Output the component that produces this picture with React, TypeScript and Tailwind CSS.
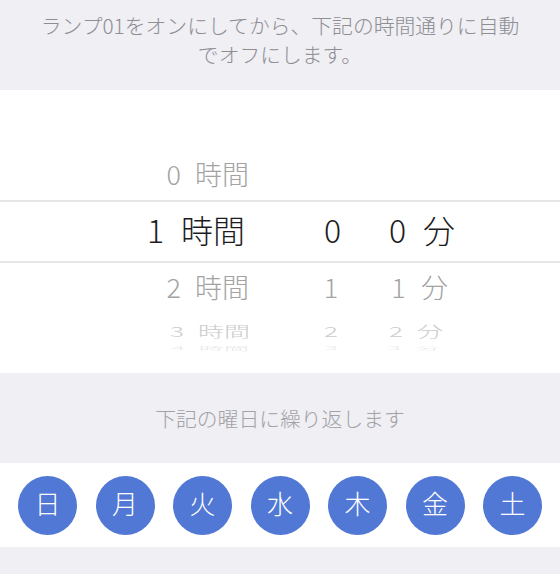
import React from 'react'

// Auto-off timer sheet: a caption, the duration wheel (hours / minutes) and
// the weekday repeat row. The wheel is static — rows are laid out by hand so
// the cylinder perspective (smaller, squashed rows away from the band) reads
// the same as the native picker.

const days = ['日', '月', '火', '水', '木', '金', '土']

function Wheel() {
  return (
    <div className="flex h-[283px] flex-col bg-white">
      <div className="h-[58px]" />

      {/* row above the selection band */}
      <div className="flex h-[52px] text-[27px] leading-[52px] text-[#a3a3a3]">
        <span className="w-[181px] text-right">0</span>
        <span className="ml-[14px] w-[54px]">時間</span>
      </div>

      {/* selected row */}
      <div className="flex h-[63px] items-start border-y-2 border-[#e6e6e8] text-[32px] leading-[55px] text-[#1c1c1e]">
        <span className="w-[164px] text-right">1</span>
        <span className="ml-[17px] w-[64px]">時間</span>
        <span className="ml-[67.5px] w-[40px] text-center">0</span>
        <span className="ml-[25px] w-[40px] text-center">0</span>
        <span className="ml-[5.5px]">分</span>
      </div>

      <div className="flex h-[51px] items-start text-[27px] leading-[47px] text-[#a3a3a3]">
        <span className="w-[181px] text-right">2</span>
        <span className="ml-[14px] w-[54px]">時間</span>
        <span className="ml-[65px] w-[34px] text-center">1</span>
        <span className="ml-[33.5px] w-[34px] text-center">1</span>
        <span className="ml-[5.5px]">分</span>
      </div>

      <div className="flex h-[35px] scale-y-[0.55] items-start text-[26px] leading-[33px] text-[#cbcbcb]">
        <span className="w-[184px] text-right">3</span>
        <span className="ml-[14px] w-[52px]">時間</span>
        <span className="ml-[64px] w-[34px] text-center">2</span>
        <span className="ml-[31px] w-[34px] text-center">2</span>
        <span className="ml-[4px]">分</span>
      </div>

      <div className="-mt-[4px] flex h-[7px] scale-y-[0.18] items-start text-[25px] leading-[4px] text-[#e8e8e8]">
        <span className="w-[185px] text-right">4</span>
        <span className="ml-[14px] w-[50px]">時間</span>
        <span className="ml-[65px] w-[34px] text-center">3</span>
        <span className="ml-[29px] w-[34px] text-center">3</span>
        <span className="ml-[4px]">分</span>
      </div>
    </div>
  )
}

export default function App() {
  return (
    <div className="min-h-screen w-[560px] bg-[#efeff4] font-['Noto_Sans_CJK_JP','Noto_Sans',sans-serif] font-light">
      <div className="h-[90px] pt-[11px] text-center text-[20.8px] leading-[29px] text-[#8e8e93]">
        ランプ01をオンにしてから、下記の時間通りに自動
        <br />
        でオフにします。
      </div>

      <Wheel />

      <div className="flex h-[90px] items-center justify-center text-[20.8px] leading-[29px] text-[#a2a2a7]">
        下記の曜日に繰り返します
      </div>

      <div className="flex h-[84px] items-center justify-center gap-[18.5px] bg-white">
        {days.map((d) => (
          <div
            key={d}
            className="flex h-[59px] w-[59px] items-center justify-center rounded-full bg-[#5278d6] pb-[4px] text-[26px] leading-none text-white"
          >
            {d}
          </div>
        ))}
      </div>
    </div>
  )
}
